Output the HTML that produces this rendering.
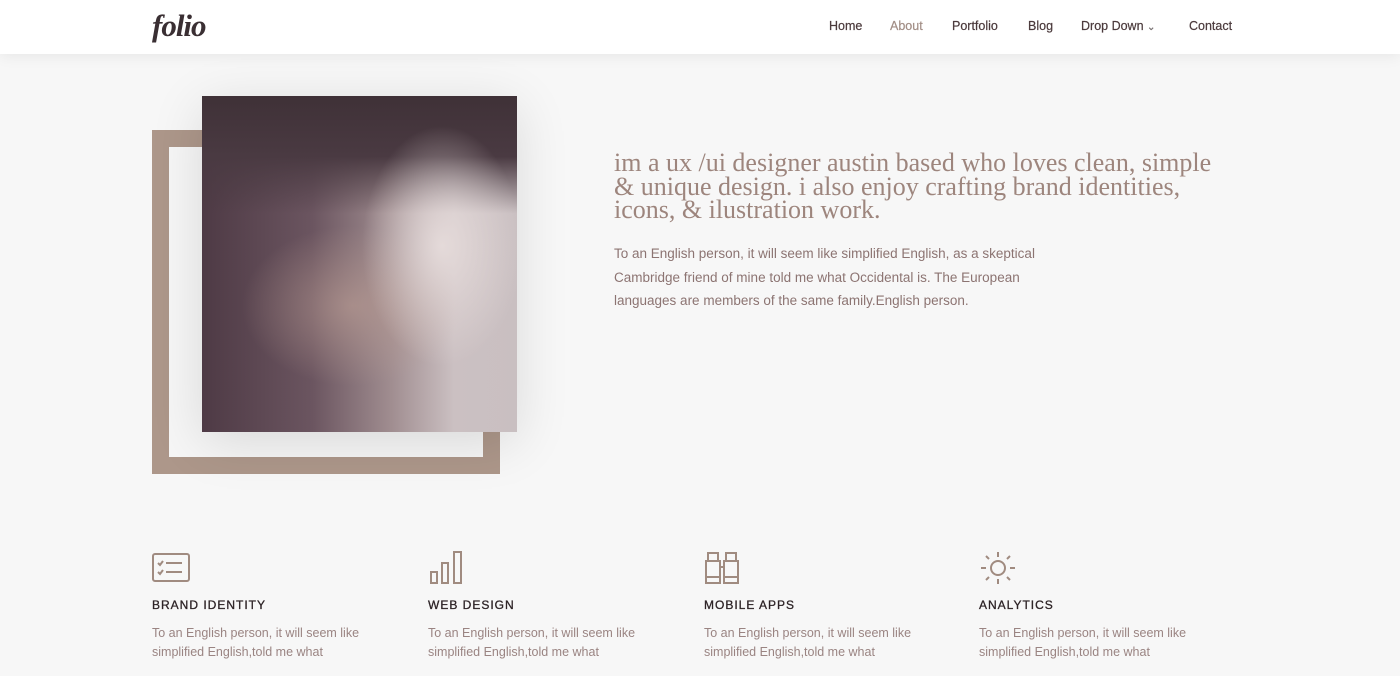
<!DOCTYPE html>
<html><head><meta charset="utf-8"><style>
*{margin:0;padding:0;box-sizing:border-box}
body{width:1400px;height:676px;overflow:hidden;background:#f7f7f7;font-family:"Liberation Sans",sans-serif;position:relative}
.nav{position:absolute;left:0;top:0;width:1400px;height:54px;background:#fff;box-shadow:0 2px 14px rgba(0,0,0,.07);z-index:5}
.logo{position:absolute;left:152px;top:8px;font-family:"Liberation Serif",serif;font-style:italic;font-weight:bold;font-size:31px;color:#3a2f33;letter-spacing:-1px}
.menu{position:absolute;top:19px;font-size:12.5px;color:#4b3a3c;-webkit-text-stroke:.2px #4b3a3c}
.frame{position:absolute;left:152px;top:130px;width:348px;height:344px;border:17px solid #ad978a;background:#f6f6f6}
.photo{position:absolute;left:202px;top:96px;width:315px;height:336px;box-shadow:0 10px 50px rgba(0,0,0,.12);
background:
radial-gradient(ellipse 80px 120px at 240px 150px,rgba(232,222,221,.9),rgba(232,222,221,0)),
radial-gradient(ellipse 110px 80px at 150px 210px,rgba(190,160,150,.6),rgba(190,160,150,0)),
linear-gradient(180deg,#3f3137 0%,#4a3a42 18%,rgba(74,58,66,0) 35%),
linear-gradient(90deg,#4e3a45 0%,#6b5560 35%,#a08d90 60%,#cbc0c2 80%,#c9bfc1 100%);}
h2{position:absolute;left:614px;top:151px;white-space:nowrap;font-family:"Liberation Serif",serif;font-weight:normal;font-size:26px;line-height:23.5px;color:#9d857d}
.p{position:absolute;left:614px;top:242px;width:460px;font-size:13.5px;line-height:23.5px;color:#8c7472}
.svc{position:absolute;top:550px;width:240px}
.svc svg{display:block;height:36px}
.svc h4{margin-top:12px;font-size:12px;letter-spacing:1px;font-weight:normal;color:#2d2326;-webkit-text-stroke:.3px #2d2326}
.svc p{margin-top:12px;font-size:12.5px;line-height:18.5px;color:#9a8482}
</style></head><body>
<div class="nav">
<div class="logo">folio</div>
<span class="menu" style="left:829px">Home</span>
<span class="menu" style="left:890px;color:#a28e86;-webkit-text-stroke:.2px #a28e86">About</span>
<span class="menu" style="left:952px">Portfolio</span>
<span class="menu" style="left:1028px">Blog</span>
<span class="menu" style="left:1081px">Drop Down <span style="font-size:10px;color:#888">&#8964;</span></span>
<span class="menu" style="left:1189px">Contact</span>
</div>
<div class="frame"></div>
<div class="photo"></div>
<h2>im a ux /ui designer austin based who loves clean, simple<br>&amp; unique design. i also enjoy crafting brand identities,<br>icons, &amp; ilustration work.</h2>
<div class="p">To an English person, it will seem like simplified English, as a skeptical Cambridge friend of mine told me what Occidental is. The European languages are members of the same family.English person.</div>

<div class="svc" style="left:152px"><svg width="40" height="36" viewBox="0 0 40 36" fill="none" stroke="#a08b80" stroke-width="2"><rect x="1" y="4" width="36" height="27" rx="2"/><path d="M6 13l2 2 3-4M6 22l2 2 3-4M14 13h16M14 22h16"/></svg><h4>BRAND IDENTITY</h4><p>To an English person, it will seem like simplified English,told me what</p></div>
<div class="svc" style="left:428px"><svg width="40" height="36" viewBox="0 0 40 36" fill="none" stroke="#a08b80" stroke-width="2"><rect x="3" y="22" width="6" height="11"/><rect x="14" y="13" width="6" height="20"/><rect x="26" y="2" width="7" height="31"/></svg><h4>WEB DESIGN</h4><p>To an English person, it will seem like simplified English,told me what</p></div>
<div class="svc" style="left:704px"><svg width="40" height="36" viewBox="0 0 40 36" fill="none" stroke="#a08b80" stroke-width="2"><path d="M4 3h10v8H4zM22 3h10v8H22zM2 11h14v22H2zM20 11h14v22H20zM16 17h4M2 27h14M20 27h14"/></svg><h4>MOBILE APPS</h4><p>To an English person, it will seem like simplified English,told me what</p></div>
<div class="svc" style="left:979px"><svg width="40" height="36" viewBox="0 0 40 36" fill="none" stroke="#a08b80" stroke-width="2"><circle cx="19" cy="18" r="7"/><path d="M19 2v5M19 29v5M2 18h5M31 18h5M7 6l3 3M28 27l3 3M31 6l-3 3M7 30l3-3"/></svg><h4>ANALYTICS</h4><p>To an English person, it will seem like simplified English,told me what</p></div>
</body></html>
